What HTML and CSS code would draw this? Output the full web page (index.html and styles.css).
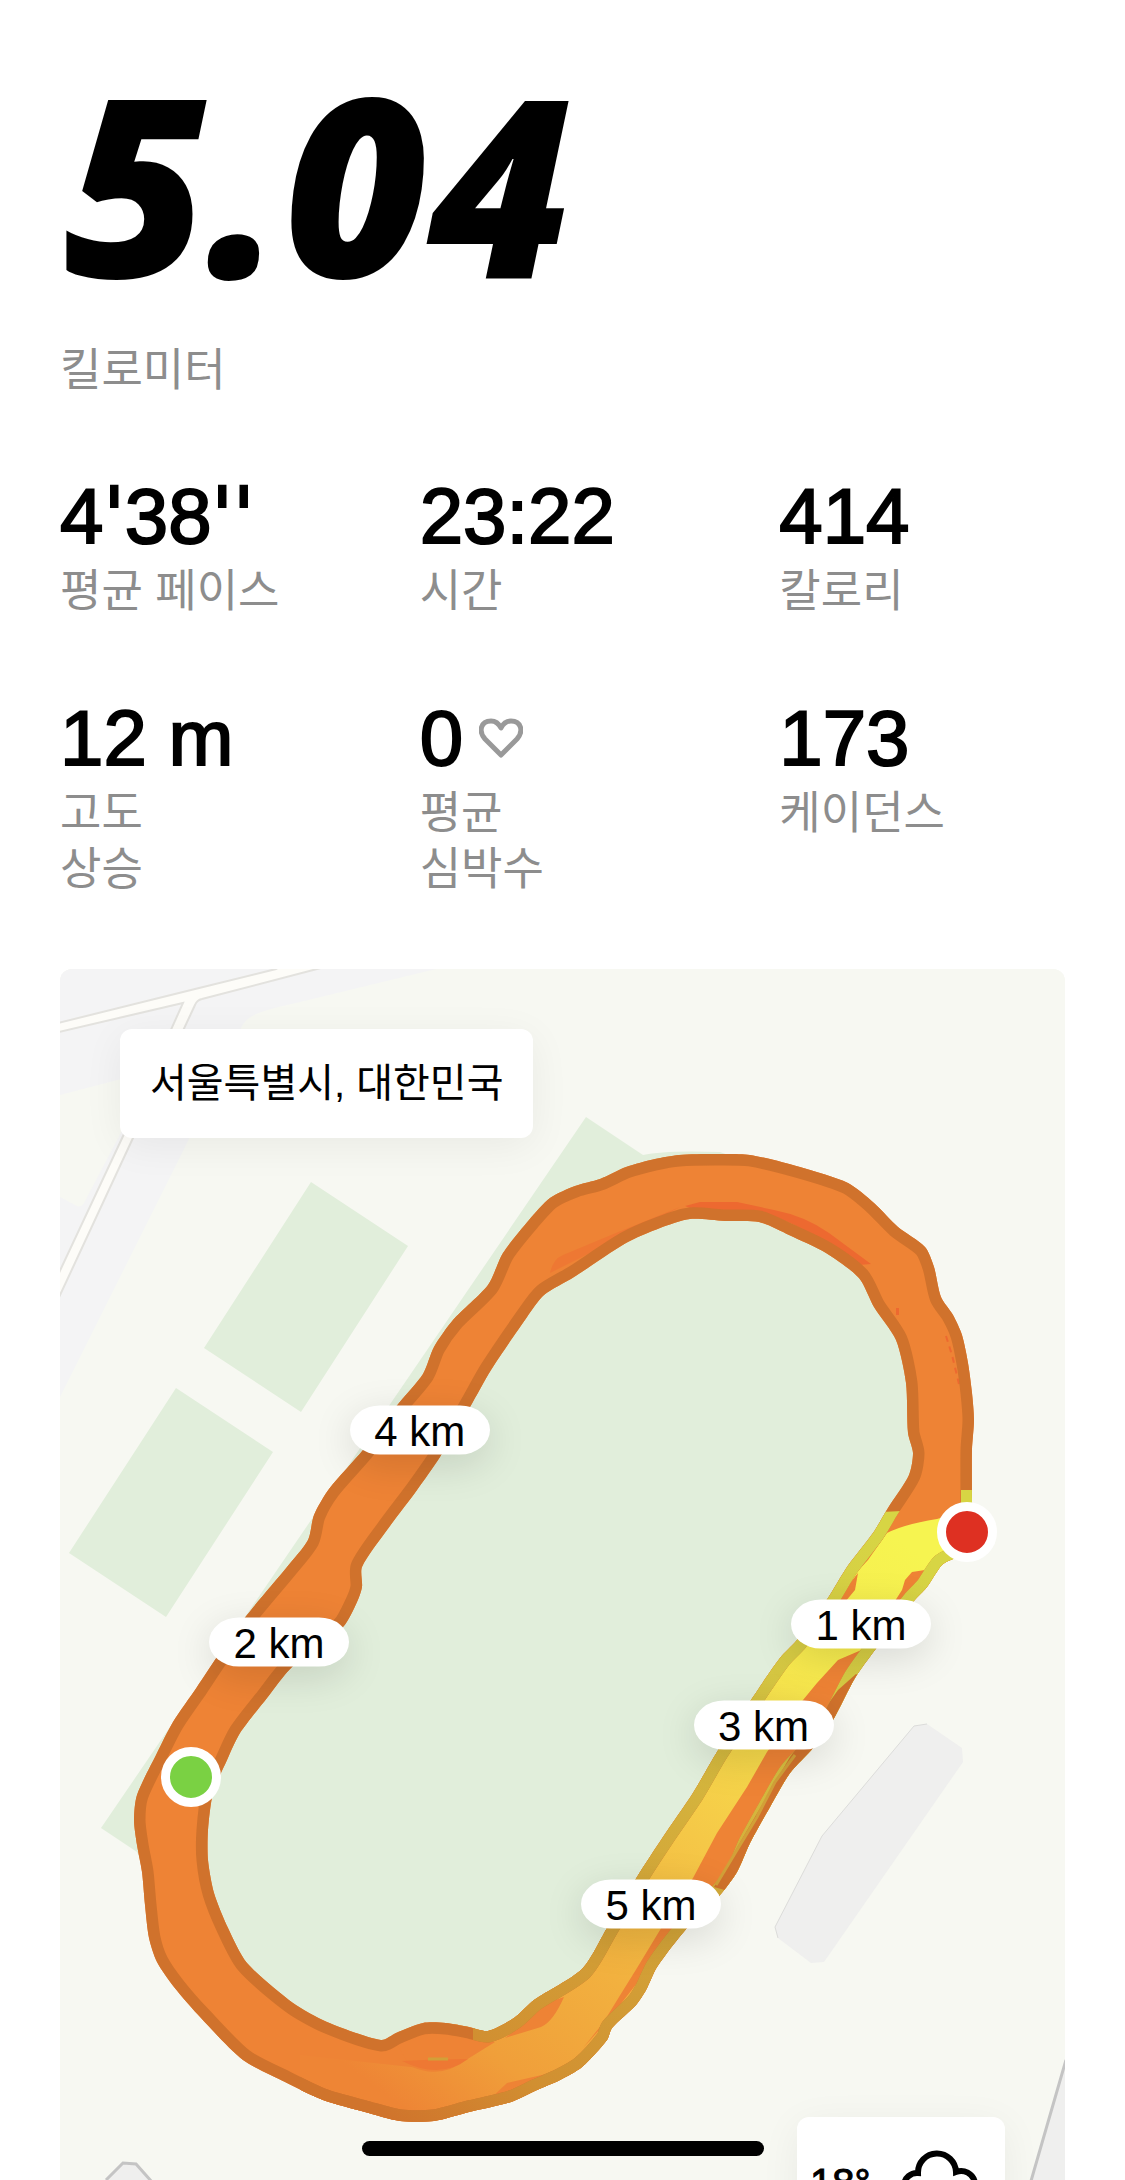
FILE: index.html
```html
<!DOCTYPE html>
<html lang="ko">
<head>
<meta charset="utf-8">
<meta name="viewport" content="width=device-width, initial-scale=1">
<title>러닝 기록</title>
<link rel="stylesheet" href="styles.css">
</head>
<body>
<main class="run">
  <header class="distance">
    <h1 class="distance-value">5.04</h1>
    <p class="label">킬로미터</p>
  </header>

  <dl class="stats">
    <div class="stat"><dd class="value">4<span class="prime">'</span>38<span class="prime">''</span></dd><dt class="label">평균 페이스</dt></div>
    <div class="stat"><dd class="value">23:22</dd><dt class="label">시간</dt></div>
    <div class="stat"><dd class="value">414</dd><dt class="label">칼로리</dt></div>
    <div class="stat"><dd class="value">12 m</dd><dt class="label">고도<br>상승</dt></div>
    <div class="stat">
      <dd class="value with-icon">0
        <svg class="heart" viewBox="0 0 44 40" aria-hidden="true"><path d="M22 37 L6 21 C-1 13 2 3 12 3 C17 3 20 6 22 10 C24 6 27 3 32 3 C42 3 45 13 38 21 Z"/></svg>
      </dd>
      <dt class="label">평균<br>심박수</dt>
    </div>
    <div class="stat"><dd class="value">173</dd><dt class="label">케이던스</dt></div>
  </dl>

  <section class="map">
    <div class="canvas">
      <svg class="terrain" viewBox="60 969 1005 1211" aria-hidden="true">
        <defs>
          <path id="ring" clip-rule="evenodd"/>
          <clipPath id="ring-clip"><use href="#ring"/></clipPath>
          <clipPath id="fast-edge"><path d="M860 1513 L961 1508 961 1490 1000 1490 1000 2180 300 2180 300 2065 473 2050 473 2000 Z"/></clipPath>
          <clipPath id="slow-edge"><path d="M838 1690 L856 1674 880 1690 760 1900 714 1887 790 1757 Z"/></clipPath>
          <linearGradient id="pace" gradientUnits="userSpaceOnUse" x1="900" y1="1540" x2="420" y2="2180">
            <stop offset="0" stop-color="#f6f450"/><stop offset=".19" stop-color="#f7ea4e"/>
            <stop offset=".45" stop-color="#f5c847"/><stop offset=".65" stop-color="#f2b13f"/>
            <stop offset=".82" stop-color="#f09f3a"/><stop offset=".94" stop-color="#ee8535"/>
          </linearGradient>
          <linearGradient id="pace-edge" gradientUnits="userSpaceOnUse" x1="900" y1="1540" x2="420" y2="2180">
            <stop offset="0" stop-color="#d7d544"/><stop offset=".19" stop-color="#d5ca43"/>
            <stop offset=".45" stop-color="#d4ae3b"/><stop offset=".65" stop-color="#d29d36"/>
            <stop offset=".82" stop-color="#d18f31"/><stop offset=".96" stop-color="#d0742c"/>
          </linearGradient>
        </defs>

        <rect class="land" x="60" y="969" width="1005" height="1211"/>
        <path class="block" d="M60 969 H436 L300 1002 C250 1013 245 1017 239 1033 L185 1147 60 1397 Z"/>
        <path class="land" d="M60 1095 L125 1078 V1125 L84 1203 Q80 1209 75 1205 L60 1197 Z"/>
        <path class="road" d="M50 1025 L191 990 276 969 290 960 350 960 317 969 202 999 Q197 1000 195 1005 L133 1138 55 1306 50 1292 124 1134 183 1003 50 1034 Z"/>
        <path class="field" d="M311 1182 L408 1246 301 1412 204 1348 Z M176 1388 L273 1452 166 1617 69 1553 Z"/>
        <path class="field" d="M101 1828 L586 1117 643 1155 Q665 1150 720 1152 L850 1200 940 1350 940 1500 620 2000 400 2080 200 1990 137 1852 Z"/>
        <path class="building" d="M914 1726 L927 1724 962 1748 963 1762 824 1962 811 1963 778 1938 775 1927 822 1836 Z"/>
        <path class="wall thin" d="M778 1938 L775 1927 822 1836 914 1726 927 1724"/>
        <path class="building" d="M106 2180 L123 2163 136 2164 152 2180 Z M1065 2062 V2180 H1031 Z"/>
        <path class="wall" d="M106 2180 L123 2163 136 2164 152 2182 M1066 2060 L1031 2181"/>

        <g clip-path="url(#ring-clip)">
          <rect class="route" x="60" y="969" width="1005" height="1211"/>
          <path fill="url(#pace)" d="M868 1560 L887 1533 Q905 1524 937 1519 L1000 1500 V2180 H300 V2055 L420 2068 500 1960 Z"/>
          <path class="route" d="M396 2043 Q440 2025 495 2042 L466 2060 Q440 2080 410 2066 Z"/>
          <path class="route-warm" d="M402 2061 Q435 2059 468 2059 Q440 2080 402 2061 Z"/>
          <path class="route" d="M858 1573 L855 1590 845 1602 835 1602 Z M925 1570 L912 1572 905 1580 902 1590 893 1604 906 1600 Z"/>
          <path class="route" d="M866 1648 L838 1660 817 1683 803 1700 767 1752 747 1787 717 1833 693 1878 660 1930 637 1968 619 1997 603 2023 583 2048 609 2019 641 1978 668 1934 717 1890 750 1833 775 1793 805 1755 848 1690 Z"/>
          <path class="route" d="M564 1997 Q553 2022 541 2027 L505 2038 522 2025 549 2002 Z M555 2072 L507 2083 490 2099 522 2091 Z"/>
          <path class="route-hot" d="M685 1206 L700 1202 737 1202 774 1210 Q805 1216 829 1233 L871 1264 859 1265 826 1242 Q790 1220 759 1211 L700 1212 Z M896 1308 h3 v7 h-3 Z"/>
          <path class="hot-line" d="M946 1336 L952 1355 959 1384"/>
          <path class="route-warm" d="M550 1273 Q553 1259 563 1255 L611 1235 680 1207 644 1226 592 1252 Z"/>
          <use class="edge" href="#ring"/>
          <use class="edge fast" href="#ring" clip-path="url(#fast-edge)"/>
          <use class="edge" href="#ring" clip-path="url(#slow-edge)"/>
          <path class="trace" d="M795 1755 L775 1782 757 1817 737 1850 716 1885 M428 2059 H448"/>
        </g>
      </svg>

      <span class="pin start"></span>
      <span class="pin finish"></span>
      <span class="marker km1">1 km</span>
      <span class="marker km2">2 km</span>
      <span class="marker km3">3 km</span>
      <span class="marker km4">4 km</span>
      <span class="marker km5">5 km</span>
    </div>
    <p class="card place">서울특별시, 대한민국</p>
    <div class="card weather">
      <span>18°</span>
      <svg class="cloud" viewBox="0 0 88 66" aria-hidden="true"><path d="M20 49 A13 13 0 0 1 22 23 A19 19 0 0 1 60 22 A14 14 0 1 1 66 49 Z"/></svg>
    </div>
  </section>
</main>
<div class="home-indicator"></div>
<script src="route.js"></script>
</body>
</html>
```
FILE: route.js
```js
// Outer and inner borders of the run, as x y pairs in map units.
const outer = "679 1155 715 1154 750 1155 800 1167 848 1183 874 1203 898 1227 925 1247 934 1267 941 1297 953 1315 962 1335 968 1363 972 1393 974 1420 972 1450 972 1500 972 1550 955 1558 942 1565 927 1587 913 1602 875 1650 855 1678 833 1720 813 1748 790 1773 770 1807 750 1843 737 1872 720 1895 687 1928 657 1967 646 1990 636 2005 612 2028 607 2040 582 2067 560 2080 537 2090 511 2102 469 2112 434 2121 400 2121 365 2112 323 2100 285 2082 243 2060 201 2018 174 1987 157 1962 149 1938 145 1905 142 1872 137 1845 134 1820 137 1795 157 1753 173 1722 197 1687 217 1657 247 1615 287 1567 308 1540 314 1515 329 1489 363 1450 399 1403 423 1374 434 1347 453 1320 488 1285 503 1253 529 1220 550 1198 575 1186 600 1179 626 1167 655 1159";
const inner = "690 1219 725 1221 759 1222 789 1235 826 1253 859 1278 874 1307 896 1340 906 1383 908 1433 913 1453 909 1475 888 1508 873 1533 847 1567 828 1598 797 1640 780 1658 753 1697 717 1752 693 1793 663 1837 637 1877 607 1928 582 1969 534 2000 514 2018 488 2031 469 2027 446 2023 423 2023 396 2033 381 2040 327 2022 293 2003 247 1963 228 1928 214 1893 208 1860 208 1830 213 1793 227 1760 240 1733 267 1698 292 1667 343 1627 357 1602 362 1587 362 1567 387 1530 417 1490 440 1457 470 1407 491 1370 527 1317 544 1295 574 1277 626 1243 660 1228";

// Closed Catmull-Rom curve through every point.
function smooth(list) {
  const v = list.split(" ").map(Number);
  const n = v.length / 2;
  const p = i => { const k = ((i + n) % n) * 2; return [v[k], v[k + 1]]; };
  let d = "M" + p(0);
  for (let i = 0; i < n; i++) {
    const [a, b, c, e] = [p(i - 1), p(i), p(i + 1), p(i + 2)];
    const reach = Math.hypot(c[0] - b[0], c[1] - b[1]) / 4;
    const handle = (from, to) => {
      const len = Math.hypot(to[0] - from[0], to[1] - from[1]);
      return [(to[0] - from[0]) / len * reach, (to[1] - from[1]) / len * reach];
    };
    const h1 = handle(a, c), h2 = handle(b, e);
    d += `C${b[0] + h1[0]} ${b[1] + h1[1]} ${c[0] - h2[0]} ${c[1] - h2[1]} ${c}`;
  }
  return d + "Z";
}

document.getElementById("ring").setAttribute("d", smooth(outer) + smooth(inner));
```
FILE: styles.css
```css
* { box-sizing: border-box; }

body {
  margin: 0;
  background: #fff;
  color: #000;
  font-family: "Liberation Sans", "Noto Sans CJK KR", sans-serif;
}

h1, p, dl, dd { margin: 0; }

.run {
  display: flex;
  flex-direction: column;
  height: 100vh;
  padding: 82px 60px 0;
  overflow: hidden;
}

.distance-value {
  margin-bottom: 61px;
  padding-left: 4px;
  font: italic 800 248px/200px "Open Sans", sans-serif;
}

.label {
  color: #8d8d8d;
  font-size: 45px;
  line-height: 56px;
}

.stats {
  display: grid;
  grid-template-columns: repeat(3, 1fr);
  gap: 78px 74px;
  margin: 77px 0 71px;
}

.stat { white-space: nowrap; }

.value {
  margin-bottom: 8px;
  font-size: 78px;
  line-height: 80px;
  -webkit-text-stroke: 2px #000;
}

.with-icon {
  display: flex;
  align-items: center;
  gap: 16px;
}

.prime {
  font-family: "DejaVu Sans", sans-serif;
  line-height: 1;
}

.heart {
  width: 44px;
  height: 40px;
  fill: none;
  stroke: #999;
  stroke-width: 5px;
  stroke-linejoin: round;
}

.map {
  position: relative;
  flex: 1;
  min-height: 0;
  overflow: hidden;
  border-radius: 12px 12px 0 0;
  background: #f7f8f2;
}

.canvas {
  position: relative;
  width: 100%;
  aspect-ratio: 1005 / 1211;
}

.terrain {
  display: block;
  width: 100%;
  height: 100%;
}

.land { fill: #f7f8f2; }
.block { fill: #f4f4f5; }
.road { fill: #fdfcf8; stroke: #e3e2de; stroke-width: 2px; }
.field { fill: #e1eedb; }
.building { fill: #efefee; }
.wall { fill: none; stroke: #c4c4c4; stroke-width: 3px; }
.wall.thin { stroke: #dcdcda; stroke-width: 1px; }
.route { fill: #ee8335; }
.route-warm { fill: #ee7833; }
.route-hot { fill: #ed6930; }
.hot-line { fill: none; stroke: #ed6930; stroke-width: 2px; stroke-dasharray: 6 5; }
.edge { fill: none; stroke: #d0722c; stroke-width: 23px; stroke-linejoin: round; }
.edge.fast { stroke: url(#pace-edge); }
.trace { fill: none; stroke: #d2a038; stroke-width: 3px; }

.marker {
  position: absolute;
  width: 140px;
  padding-top: 2px;
  border-radius: 30px / 50%;
  background: #fff;
  box-shadow: 0 10px 40px rgba(0, 0, 0, .13);
  font-size: 42px;
  line-height: 47px;
  text-align: center;
  transform: translate(-50%, -50%);
}

.km1 { left: 79.7%; top: 54.1%; }
.km2 { left: 21.8%; top: 55.6%; }
.km3 { left: 70%; top: 62.4%; }
.km4 { left: 35.8%; top: 38.1%; }
.km5 { left: 58.8%; top: 77.2%; }

.pin {
  position: absolute;
  width: 60px;
  height: 60px;
  border: 9px solid #fff;
  border-radius: 50%;
  transform: translate(-50%, -50%);
}

.start { left: 13%; top: 66.7%; background: #7ad143; }
.finish { left: 90.2%; top: 46.5%; background: #de3022; }

.card {
  position: absolute;
  border-radius: 12px;
  background: #fff;
  box-shadow: 0 8px 40px rgba(0, 0, 0, .06);
}

.place {
  top: 60px;
  left: 60px;
  padding: 0 30px;
  font-size: 40px;
  line-height: 109px;
}

.weather {
  right: 60px;
  bottom: -49px;
  display: flex;
  justify-content: space-between;
  width: 208px;
  height: 112px;
  padding: 33px 21px 13px 13px;
  font-size: 40px;
  line-height: 66px;
  -webkit-text-stroke: 1px #000;
}

.cloud {
  width: 88px;
  height: 66px;
  fill: none;
  stroke: #000;
  stroke-width: 6px;
}

.home-indicator {
  position: fixed;
  bottom: 24px;
  left: 50%;
  width: 402px;
  height: 15px;
  border-radius: 8px;
  background: #000;
  transform: translateX(-50%);
}
```
